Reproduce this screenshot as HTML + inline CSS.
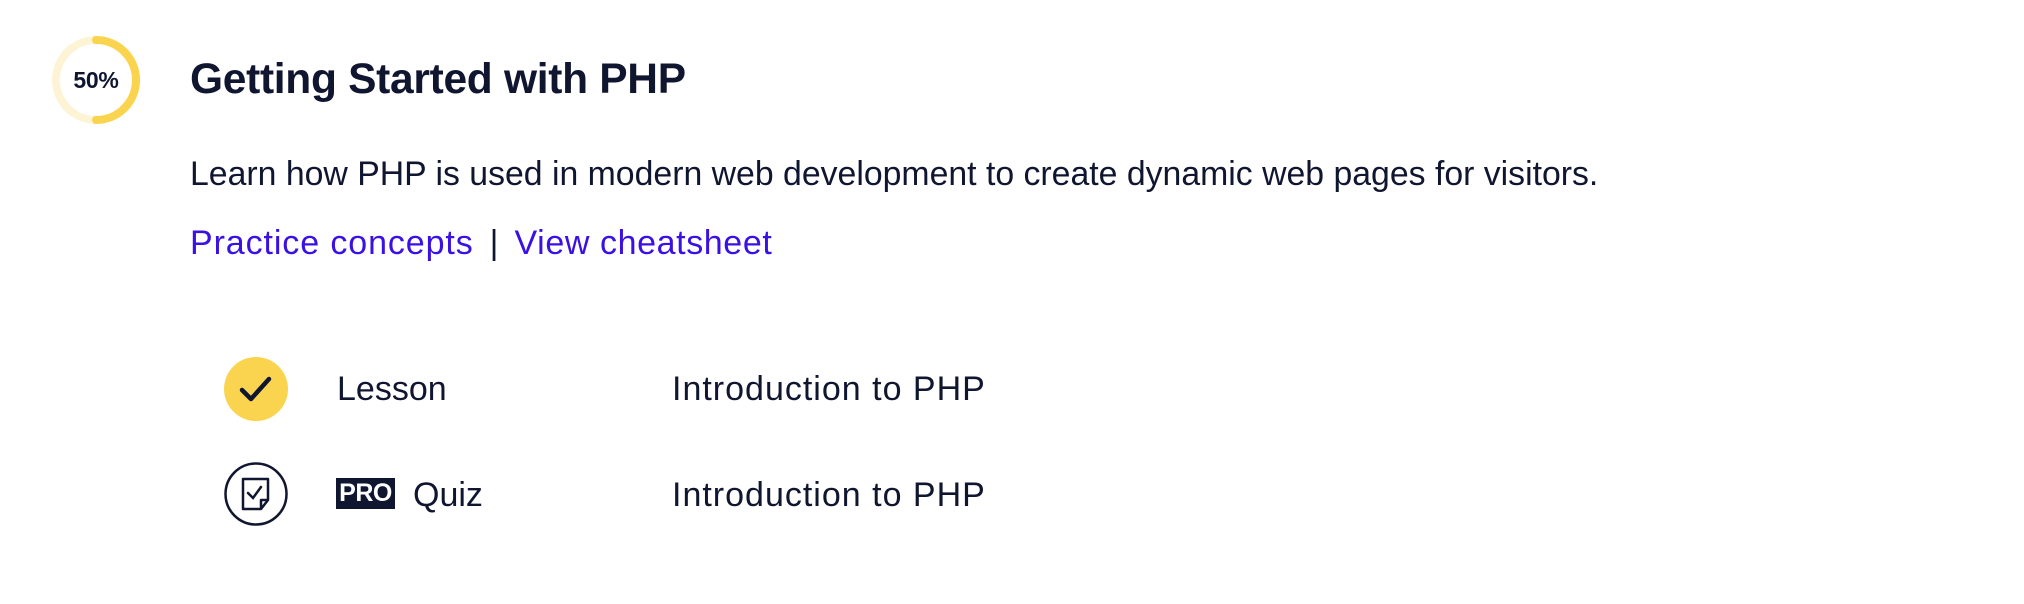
<!DOCTYPE html>
<html><head><meta charset="utf-8"><style>
body{margin:0;width:2024px;height:604px;background:#fff;font-family:"Liberation Sans",sans-serif;color:#10162f;position:relative;overflow:hidden}
.a{position:absolute;white-space:nowrap}
</style></head><body>
<svg class="a" style="left:50px;top:34px" width="92" height="92" viewBox="0 0 92 92">
<circle cx="46" cy="46" r="40" fill="none" stroke="#fdf4d6" stroke-width="8"/>
<path d="M46 6 A40 40 0 0 1 46 86" fill="none" stroke="#fad44e" stroke-width="8" stroke-linecap="round"/>
<text x="46" y="54" text-anchor="middle" font-family="Liberation Sans" font-weight="bold" font-size="23" fill="#10162f" letter-spacing="-0.3">50%</text>
</svg>
<div class="a" style="left:190px;top:56px;font-size:42.5px;font-weight:bold;letter-spacing:-0.3px">Getting Started with PHP</div>
<div class="a" style="left:190px;top:155px;font-size:33.8px">Learn how PHP is used in modern web development to create dynamic web pages for visitors.</div>
<div class="a" style="left:190px;top:224px;font-size:34px"><span style="color:#3a10e5;letter-spacing:0.9px">Practice concepts</span><span style="margin:0 16px">|</span><span style="color:#3a10e5;letter-spacing:0.6px">View cheatsheet</span></div>
<svg class="a" style="left:224px;top:357px" width="64" height="64" viewBox="0 0 64 64">
<circle cx="32" cy="32" r="32" fill="#fad44e"/>
<path d="M18 33 L27 42 L45 22" fill="none" stroke="#10162f" stroke-width="4.5" stroke-linecap="round" stroke-linejoin="round"/>
</svg>
<div class="a" style="left:337px;top:370px;font-size:34px">Lesson</div>
<div class="a" style="left:672px;top:370px;font-size:34px;letter-spacing:1px">Introduction to PHP</div>
<svg class="a" style="left:224px;top:462px" width="64" height="64" viewBox="0 0 64 64">
<circle cx="32" cy="32" r="30.5" fill="none" stroke="#10162f" stroke-width="2.5"/>
<path d="M19 17 H44 V38 L37 47 H19 Z M44 38 H37 V47" fill="none" stroke="#10162f" stroke-width="2.5" stroke-linejoin="round"/>
<path d="M24 31 L29 36 L37 25" fill="none" stroke="#10162f" stroke-width="2.5" stroke-linecap="round"/>
</svg>
<div class="a" style="left:336px;top:478px;width:59px;height:31px;background:#10162f;color:#fff;font-weight:bold;font-size:25px;line-height:31px;text-align:center;letter-spacing:-0.5px">PRO</div>
<div class="a" style="left:413px;top:476px;font-size:34px">Quiz</div>
<div class="a" style="left:672px;top:476px;font-size:34px;letter-spacing:1px">Introduction to PHP</div>
</body></html>
